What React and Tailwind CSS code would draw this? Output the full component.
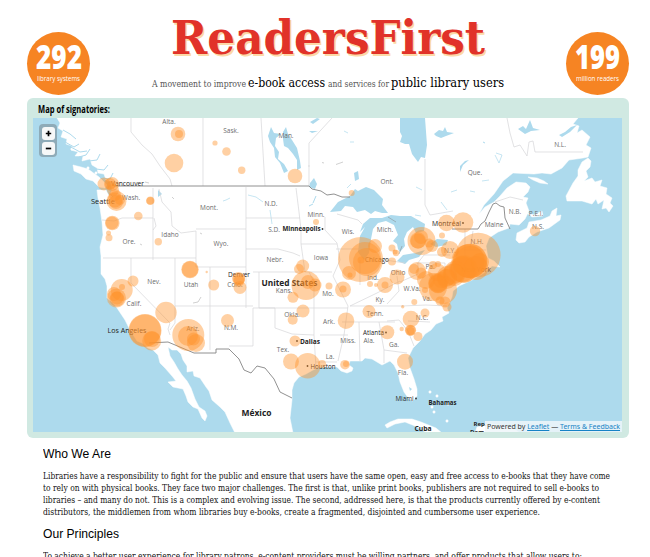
import { useLayoutEffect, useRef } from "react";

// Sets one line of text to a given measure by condensing or widening it.
function Line({ width, className = "", children }) {
  const ref = useRef(null);
  useLayoutEffect(() => {
    const el = ref.current;
    el.style.transform = "none";
    const natural = el.getBoundingClientRect().width;
    el.style.transform = `scaleX(${width / natural})`;
  }, [width]);
  return (
    <div style={{ width }} className={className}>
      <span ref={ref} className="inline-block origin-left whitespace-nowrap">
        {children}
      </span>
    </div>
  );
}

const LAND = [
  "57,118 60,123 58,128 63,131 61,137 67,139 66,144 72,146 71,150 78,152 75,156 83,156 82,161 90,159 92,165 97,168 98,173 104,174 106,180 111,182 112,190 109,196 106,190 97,190 98,198 100,208 102,222 103,235 100,247 101,256 101,274 105,279 107,286 107,298 113,303 117,308 121,314 125,320 129,328 132,333 137,341 142,343 148,348 153,350 158,355 160,363 165,368 172,376 176,381 168,382 173,387 183,389 186,396 188,402 193,407 198,409 202,418 205,421 207,416 205,411 199,407 195,399 191,388 187,381 182,375 178,369 174,362 170,356 168,347 172,350 177,350 181,354 183,360 187,366 187,372 193,371 194,376 200,378 206,387 209,391 212,400 220,407 225,412 230,423 235,433 293,433 290,418 292,400 292,390 294,383 299,377 306,374 313,370 320,367 329,367 337,367 341,371 347,373 352,371 353,368 349,365 350,361 362,361 365,358 372,359 382,365 390,361 394,365 398,373 400,382 404,392 409,399 413,401 417,396 417,389 414,379 410,368 408,358 413,348 420,341 425,334 431,330 436,324 443,321 442,317 449,313 447,308 452,297 453,291 459,286 472,280 484,273 492,266 500,267 494,261 488,258 486,246 489,238 498,232 509,228 510,224 519,225 525,219 529,211 526,203 528,198 523,197 528,192 530,187 526,183 516,182 507,188 500,196 494,202 485,207 479,214 484,205 494,194 503,181 513,173 534,174 542,173 551,174 562,168 569,160 583,158 588,157 591,148 586,145 590,137 582,130 577,133 579,126 573,124 578,118",
  "588,158 591,161 590,167 586,171 588,177 584,181 592,178 595,182 602,180 600,186 607,188 606,194 612,198 610,203 613,206 609,212 606,208 602,209 604,200 598,204 596,199 592,204 582,201 567,201 566,196 573,183 578,176 578,170 582,162",
  "517,233 527,228 529,222 541,220 550,216 552,211 557,208 556,216 561,215 560,220 549,228 537,232 529,237 525,242 519,243 516,240",
  "527,213 534,215 542,211 543,216 532,217",
  "528,177 537,178 544,181 548,184 540,183 533,180",
  "73,165 81,167 88,169 99,177 107,185 105,188 99,187 93,181 86,179 81,174 74,171",
  "385,425 390,422 398,419 412,419 421,422 436,428 442,433 427,433 415,426 405,422 395,424 387,428",
  "475,433 477,427 491,424 510,426 520,433",
];
const LAKES = [
  "330,212 338,202 350,196 355,189 358,191 366,187 374,190 383,199 382,205 388,213 382,213 375,211 371,214 365,210 357,212 353,207 345,206 341,211",
  "363,224 370,218 382,218 391,215 400,216 411,216 418,220 425,224 424,231 416,233 413,227 407,232 404,239 405,246 400,252 398,249 397,244 393,241 398,235 394,225 386,221 378,223 373,229 371,239 369,253 364,260 358,252 360,236 365,227 360,232",
  "397,261 403,255 415,253 425,250 419,257 409,260 405,264",
  "430,244 437,239 448,240 446,245 436,247",
  "400,118 400,132 402,136 400,142 405,144 409,144 412,154 418,162 421,157 425,158 427,145 425,118",
  "283,132 286,127 288,134 292,140 297,148 300,161 301,168 297,170 297,160 293,154 288,148 284,146 283,139",
  "268,136 271,127 274,133 281,134 276,138 275,146 279,152 278,159 284,164 288,171 284,173 280,163 275,157 274,148 270,142",
  "310,183 314,178 317,184 315,189 309,187",
  "354,173 358,171 359,179 355,181",
  "310,122 317,118 320,119 313,124", "309,131 318,131 312,133",
  "434,134 439,130 443,131 445,127 447,132 454,133 446,136 441,138 436,136",
  "460,172 460,166 465,161 469,160 463,165",
  "518,129 523,126 526,129 530,120 533,128 540,130 531,131 525,134",
  "559,135 565,132 571,127 577,125 570,132 562,137",
  "158,190 162,194 158,197", "409,387 412,389 410,391",
];
const STATES = [
  "M131 118V132L142 145L152 154L160 166L170 179L172 186",
  "M203 118V186", "M261 118L265 186", "M309 165V186M309 143V167M309 143L332 118",
  "M102 220L114 221L122 218L153 218M153 188V260M154 218L156 226L153 230",
  "M159 189L162 202L171 212L172 226L181 233L196 231V258M196 229H246M246 187V308M103 258H196",
  "M131 258V283L170 323L168 329L170 335M175 258V306H253M196 258V267H210M210 267V350M210 267H246M175 306V323L170 330",
  "M246 218H300M246 249H278L293 253L300 256M253 272H300M259 272V308H314M253 308V346H229",
  "M253 308H275V328L292 334L314 335L316 369M314 308V335M314 308H348",
  "M296 188L299 212L301 230V244H337M301 244L305 272H332M309 272L314 282V308M325 217V230L337 243L340 260L333 276L348 306L344 335L338 361",
  "M337 214L358 220L362 224M336 249H360M360 260V285M350 306L377 293L400 281M385 260L405 263M350 306H403M342 322H395M359 322L360 361M379 322L384 350V363M384 350L407 353M348 335H320M316 362H337",
  "M397 276L399 291L387 304M400 282L418 274V263H445V284M402 306L426 305L447 306M387 321L399 320L408 331L414 346M408 321L430 322",
  "M465 229V256M473 231L470 249M464 250H486M417 264L424 255H450M453 264L457 278",
  "M507 118L510 133L514 147L520 145L527 156L529 142L533 141L535 152H583",
  "M425 159V205L430 215L453 211M495 202L510 197L523 200",
];
const LABELS = [
  ["Alta.", 169, 124], ["Sask.", 231, 133], ["Man.", 286, 138], ["Ont.", 387, 184],
  ["Que.", 475, 175], ["N.L.", 560, 147], ["Wash.", 131, 200], ["Mont.", 209, 210],
  ["Ore.", 129, 244], ["Idaho", 170, 237], ["Wyo.", 221, 246], ["N.D.", 271, 206],
  ["S.D.", 274, 232], ["Minn.", 316, 217], ["Wis.", 348, 234], ["Mich.", 385, 232],
  ["Nebr.", 275, 262], ["Iowa", 321, 260], ["Nev.", 154, 284], ["Utah", 191, 287],
  ["Calif.", 134, 306], ["Colo.", 235, 287], ["Kans.", 284, 293], ["Mo.", 328, 296],
  ["Ariz.", 193, 331], ["N.M.", 231, 330], ["Okla.", 292, 317], ["Ark.", 329, 324],
  ["Tenn.", 375, 316], ["Ky.", 380, 302], ["Ind.", 373, 280], ["Ohio", 398, 275],
  ["W.Va.", 412, 291], ["Va.", 427, 301], ["Pa.", 430, 269], ["N.Y.", 450, 253],
  ["N.H.", 477, 244], ["Maine", 494, 227], ["N.B.", 515, 214], ["P.E.I.", 536, 216],
  ["N.S.", 538, 229], ["N.C.", 422, 320], ["Ga.", 394, 347], ["Ala.", 369, 343],
  ["Miss.", 348, 343], ["Tex.", 283, 352], ["La.", 330, 359], ["Fla.", 403, 375],
];
const CIRCLES = [
  [178, 134, 7.3], [179, 134, 4], [174, 163, 9.3], [215, 143, 2.6], [226.5, 151.5, 4.3],
  [241.7, 170.3, 3.7], [295, 176, 7.3], [351.7, 193, 3], [316, 222, 3], [104, 184, 6.5],
  [112, 184, 7], [110, 184, 6], [111, 185, 4], [113, 190, 6], [116.5, 201, 10],
  [115, 200, 7.5], [116, 202, 7], [120, 200, 5], [115, 195, 6], [150.3, 200.7, 4.3],
  [150.3, 200.7, 3.8], [138.3, 216, 4.3], [112.3, 223, 7.3], [112, 223, 6.5], [109, 237.7, 3.5],
  [108.5, 233, 2.5], [158.3, 241.7, 3.7], [190, 269.5, 8.7], [190, 269.5, 8.2],
  [213.7, 285, 5.5], [206.7, 272, 1.2], [121.7, 290, 11], [122, 287, 3], [133, 281, 5.5],
  [116.5, 298, 9.5], [114, 294, 7], [117, 299, 7.5], [117, 298, 6.5], [166, 312.5, 10.7],
  [145, 330.5, 16.5], [145, 330.5, 16], [151.7, 341, 9.5], [152, 339, 8], [188.3, 335, 16],
  [188, 336, 10], [193.5, 339, 6.5], [196, 343, 9], [227.5, 320.5, 6.5], [238.5, 278.5, 6.5],
  [239, 279, 6], [239, 281, 5.5], [240, 287.5, 6.5], [302.7, 266, 6.5], [299, 269, 5],
  [306, 285.5, 14.5], [308, 282, 7], [315, 285, 6.5], [293, 297.3, 5.5], [329, 286, 3.5],
  [343, 289.5, 8], [343, 289, 3.5], [303, 311, 6.5], [292.7, 319.7, 5], [346, 320.7, 8.3],
  [369, 311.5, 6.5], [295, 341, 5.5], [291, 361.5, 8], [307.7, 365.7, 12.7], [322, 364, 4],
  [345, 364.7, 4.8], [346, 364, 3], [387.3, 332.3, 7], [405, 361.7, 8], [411, 319, 8.3],
  [410.5, 330.3, 5.6], [410.5, 330.3, 5.2], [410.5, 331, 4], [418, 336.5, 4.5], [401.7, 329, 2.2],
  [414.3, 302, 3], [402.7, 306.7, 1.7], [425, 313, 4.5], [385, 285, 8], [385, 285, 3.5],
  [397, 277, 7.5], [370, 284, 3], [376, 285, 2], [360.5, 259.5, 22.5], [367, 262, 14],
  [361, 260, 3.5], [375, 246, 7], [349, 273, 7], [350, 275, 2.5], [365, 258, 16],
  [392, 248, 3.5], [396, 253, 3.2], [395, 252, 2.5], [392, 261.5, 4], [421.5, 241, 14], [418, 240.5, 8.2],
  [418, 241, 7.5], [421, 237, 7], [417, 271, 9], [421, 273, 5.5], [414, 269, 5],
  [432, 246, 6], [429, 243, 4.5], [442, 235.5, 3], [450, 250, 9], [442, 252, 5], [438, 264, 3], [433, 265, 4],
  [446.5, 223, 8.3], [463, 222.5, 10.3],
  [478.3, 255, 22.3], [470, 261, 17.3], [470, 261, 17], [468, 261, 16.5], [470, 262, 16],
  [464, 269, 13.5], [463, 270, 13], [462, 269, 13], [455, 272, 11], [454, 275, 11], [453, 274, 10.5],
  [447, 276, 10], [447, 279, 10], [446, 278, 9], [438, 283, 10], [438, 284, 9.3], [438, 283, 9], [441, 280, 8],
  [476, 268, 12], [480, 262, 9], [433, 287, 14], [443, 290, 14], [426, 280, 9], [425, 290, 3],
  [437, 272, 9], [445, 302, 5.5], [447, 307, 4.5], [440, 301, 4.5], [535, 231, 5.2],
];

function CityLabel({ x, y, size = 7, length, bold, children }) {
  return (
    <text x={x} y={y} fontSize={size} textLength={length} lengthAdjust="spacingAndGlyphs"
      fontWeight={bold ? 700 : 400} fill="#222">{children}</text>
  );
}

function SignatoryMap() {
  return (
    <svg viewBox="33 118 589 314" className="block h-[314px] w-[589px] bg-[#addaed] font-['Open_Sans',sans-serif]">
      <g fill="#fff" stroke="#fff" strokeWidth=".5" strokeLinejoin="round">
        {LAND.map((p) => <polygon key={p} points={p} />)}
        {[[72,149],[88,168],[96,173],[430,392],[437,396],[432,407],[434,412],[448,404],[447,421]].map(([x, y]) => <circle key={`${x}-${y}`} cx={x} cy={y} r="1.2" />)}
      </g>
      <g fill="none" stroke="#addaed" strokeWidth="1">
        <path d="M65 142L74 147L79 144M79 157L86 155L90 149M89 161L97 160L100 154M96 169L104 170L108 165M100 178L110 179L113 173M107 190L113 197M63 130L70 134L76 139M69 146L80 152L87 151" />
        <path strokeWidth=".7" d="M223 201L226 200L230 198M248 195L256 197L263 202M270 210L272 224M347 188L351 184M451 192L457 190M482 181L489 180M470 191L475 192M441 202L444 206L447 210M495 155L499 163L502 155L496 153M344 131L348 133M350 142L354 142M416 187L422 190M415 215L421 216" />
        <path d="M316 196L313 203M309 206L313 204M483 142L485 143" />
      </g>
      <g fill="#addaed">{LAKES.map((p) => <polygon key={p} points={p} />)}</g>
      <g fill="none" stroke="#d6d6d9" strokeWidth=".7">{STATES.map((d) => <path key={d} d={d} />)}</g>
      <g fill="none" stroke="#bbb" strokeWidth=".7">
        <path d="M322 162.500L324 163M336 164.500L343 162M172 197L174 199M200 233L202 234M140 244L142 245M193 303L198 302L201 297M145 182L149 183" />
      </g>
      <g fill="none" stroke="#858585" strokeWidth=".9">
        <path d="M114 186H309L312 189L321 191L327 195L334 194L342 197L350 197" />
        <path d="M149 343L168 342L194 353H216V349H229L239 359L244 370L251 373L257 366L265 368L274 379L280 392L292 398" />
        <path d="M452 229H478L481 224L485 221L489 212L493 204L496 203L500 206L504 207L505 218L510 229" />
        <path d="M388 217L396 222M399 254L402 246" strokeWidth=".5" />
      </g>
      <g fontSize="6.5" fill="#6c6c6c" textAnchor="middle">
        {LABELS.map(([name, x, y]) => <text key={name} x={x} y={y}>{name}</text>)}
      </g>
      <CityLabel x="111" y="186" length={33}>Vancouver</CityLabel>
      <CityLabel x="91" y="204" length={24}>Seattle</CityLabel>
      <CityLabel x="107.5" y="332.5" length={39}>Los Angeles</CityLabel>
      <CityLabel x="228" y="277" length={22}>Denver</CityLabel>
      <CityLabel x="365" y="262" length={24}>Chicago</CityLabel>
      <CityLabel x="432" y="225.5" length={29}>Montréal</CityLabel>
      <CityLabel x="363" y="335" length={21}>Atlanta</CityLabel>
      <CityLabel x="310.5" y="368.5" length={25}>Houston</CityLabel>
      <CityLabel x="395.5" y="401" length={18}>Miami</CityLabel>
      <CityLabel x="461" y="272" length={30}>New York</CityLabel>
      <CityLabel x="282.5" y="231" length={38} bold>Minneapolis</CityLabel>
      <CityLabel x="300" y="343.5" length={20} bold>Dallas</CityLabel>
      <CityLabel x="261.5" y="285.5" size={8.5} length={56} bold>United States</CityLabel>
      <CityLabel x="241.5" y="415.5" size={8.5} length={30} bold>México</CityLabel>
      <CityLabel x="428.5" y="405" size={6.5} length={28} bold>Bahamas</CityLabel>
      <CityLabel x="414.5" y="430.5" size={6.5} length={17} bold>Cuba</CityLabel>
      <CityLabel x="473.5" y="426" size={6} bold>Rep.</CityLabel>
      <CityLabel x="470" y="434" size={6} bold>Dom.</CityLabel>
      <g fill="#333">
        {[[322.5,229],[297,341],[307.5,366],[386,332.5],[416,398.5],[463,223]].map(([x, y]) => <circle key={x} cx={x} cy={y} r=".9" />)}
      </g>
      <g fill="#ff922a" fillOpacity=".43">
        {CIRCLES.map(([x, y, r], i) => <circle key={i} cx={x} cy={y} r={r} />)}
      </g>
    </svg>
  );
}

function Badge({ value, valueWidth, label, labelWidth }) {
  return (
    <div className="flex h-[63px] w-[63px] flex-col items-center rounded-full bg-[#f68423] pt-[9px] font-['Open_Sans',sans-serif] text-white">
      <Line width={valueWidth} className="h-[31px] text-[34px] leading-[31px] font-extrabold">{value}</Line>
      <Line width={labelWidth} className="text-[8px] leading-[11px] font-medium">{label}</Line>
    </div>
  );
}

const zoomButton = "flex h-[13px] w-[13px] items-center justify-center rounded-[3px] bg-[#f6f8f8] text-black";

export default function App() {
  return (
    <div className="h-[557px] w-[650px] overflow-hidden bg-white pl-[27px] font-['DejaVu_Serif_Condensed','DejaVu_Serif',serif] text-[#111]">
      <header className="flex h-[98px] w-[602px] justify-between">
        <div className="pt-[32px]"><Badge value="292" valueWidth={46} label="library systems" labelWidth={43} /></div>
        <div className="w-[352px]">
          <Line width={314} className="ml-[19px] h-[70px] pt-[12px] text-[47px] leading-[52px] font-bold text-[#e13229] [text-shadow:1.5px_1.5px_0_#fcd9a7]">ReadersFirst</Line>
          <div className="flex items-baseline justify-between leading-[26px]">
            <Line width={94} className="text-[9px] text-[#555]">A movement to improve</Line>
            <Line width={77} className="text-[12px] text-black">e-book access</Line>
            <Line width={61} className="text-[9px] text-[#555]">and services for</Line>
            <Line width={113} className="text-[12px] text-black">public library users</Line>
          </div>
        </div>
        <div className="pt-[32px]"><Badge value="199" valueWidth={45} label="million readers" labelWidth={43} /></div>
      </header>

      <section className="h-[340px] w-[602px] rounded-[6px] bg-[#d0e9e2] px-[6px]">
        <Line width={72} className="h-[20px] pl-[5px] font-['Open_Sans',sans-serif] text-[10px] leading-[22px] font-bold text-black">Map of signatories:</Line>
        <div className="relative w-[589px]">
          <SignatoryMap />
          <div className="absolute top-[6px] left-[6px] flex flex-col gap-[2px] rounded-[4px] bg-[#8eabb8] p-[2.5px]">
            <button aria-label="Zoom in" className={zoomButton}>
              <svg viewBox="0 0 7 7" className="size-[7px]"><path d="M3.5 .8V6.2M.8 3.5H6.2" stroke="currentColor" strokeWidth="1.7" /></svg>
            </button>
            <button aria-label="Zoom out" className={zoomButton}>
              <svg viewBox="0 0 7 7" className="size-[7px]"><path d="M.8 3.5H6.2" stroke="currentColor" strokeWidth="1.7" /></svg>
            </button>
          </div>
          <div className="absolute right-0 bottom-0 flex h-[11px] items-center bg-[#eef6f9]/85 pr-[2px] pl-[2px] font-['Noto_Sans',sans-serif] text-[7.5px] leading-[11px] text-[#333]">
            <Line width={133}>
              Powered by <a className="text-[#1683c5] underline" href="#leaflet">Leaflet</a> — <a className="text-[#1683c5] underline" href="#terms">Terms &amp; Feedback</a>
            </Line>
          </div>
        </div>
      </section>

      <main className="pl-[16px] text-[8.75px] leading-[12px]">
        <Line width={68} className="mt-[8px] h-[24px] font-['Liberation_Sans',Arial,sans-serif] text-[13px] leading-[16px] text-black">Who We Are</Line>
        <div>
          <Line width={567}>Libraries have a responsibility to fight for the public and ensure that users have the same open, easy and free access to e-books that they have come</Line>
          <Line width={556}>to rely on with physical books. They face two major challenges. The first is that, unlike print books, publishers are not required to sell e-books to</Line>
          <Line width={557}>libraries – and many do not. This is a complex and evolving issue. The second, addressed here, is that the products currently offered by e-content</Line>
          <Line width={497}>distributors, the middlemen from whom libraries buy e-books, create a fragmented, disjointed and cumbersome user experience.</Line>
        </div>
        <Line width={76} className="mt-[8px] h-[24px] font-['Liberation_Sans',Arial,sans-serif] text-[13px] leading-[16px] text-black">Our Principles</Line>
        <Line width={539}>To achieve a better user experience for library patrons, e-content providers must be willing partners, and offer products that allow users to:</Line>
      </main>
    </div>
  );
}
